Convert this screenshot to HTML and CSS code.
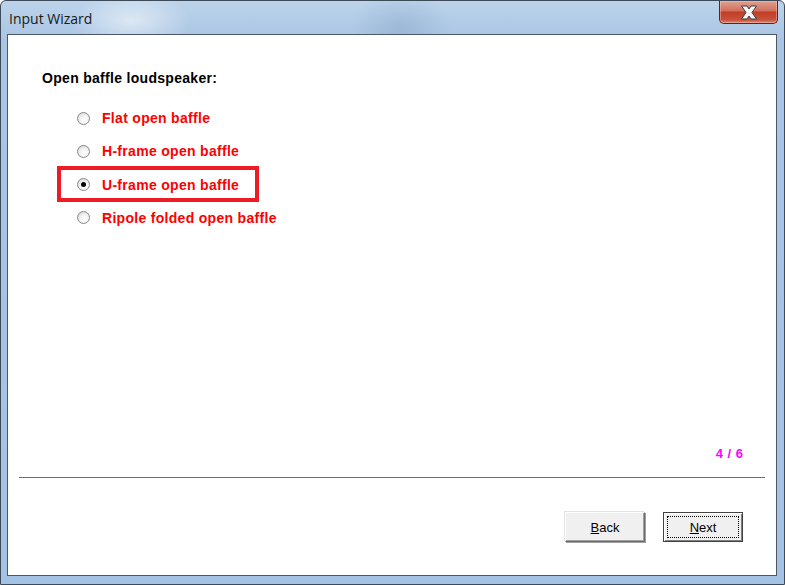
FILE: index.html
```html
<!DOCTYPE html>
<html>
<head>
<meta charset="utf-8">
<link rel="stylesheet" href="styles.css">
</head>
<body>
<div class="window">
  <div class="titlebar">
    <span class="title">Input Wizard</span>
    <div class="close">
      <svg width="22" height="15" viewBox="0 0 22 15">
        <path d="M3.5 1 L9 1 L11 4 L13 1 L18.5 1 L14 7.5 L18.5 14 L13 14 L11 11 L9 14 L3.5 14 L8 7.5 Z" fill="#f6f6f6" stroke="#3c3c3c" stroke-width="1" stroke-linejoin="round"/>
      </svg>
    </div>
  </div>
  <div class="client">
    <div class="heading">Open baffle loudspeaker:</div>
    <ul class="options">
      <li class="opt"><span class="radio"></span><span class="label">Flat open baffle</span></li>
      <li class="opt"><span class="radio"></span><span class="label">H-frame open baffle</span></li>
      <li class="opt"><span class="radio checked"></span><span class="label">U-frame open baffle</span></li>
      <li class="opt"><span class="radio"></span><span class="label">Ripole folded open baffle</span></li>
    </ul>
    <div class="highlight"></div>
    <div class="spacer"></div>
    <div class="pager">4 / 6</div>
    <div class="sep"></div>
    <div class="buttons">
      <button class="btn"><u>B</u>ack</button>
      <button class="btn default"><span class="focus"><u>N</u>ext</span></button>
    </div>
  </div>
</div>
</body>
</html>
```

FILE: styles.css
```css
html, body {
  margin: 0;
  padding: 0;
  width: 785px;
  height: 585px;
  overflow: hidden;
  background: #ffffff;
}

.window {
  position: relative;
  box-sizing: border-box;
  width: 785px;
  height: 585px;
  display: flex;
  flex-direction: column;
  border: 1px solid #3c4a5a;
  border-radius: 6px 6px 0 0;
  background:
    radial-gradient(ellipse 60px 30px at 130px 20px, rgba(255,255,255,0.55), rgba(255,255,255,0) 100%),
    radial-gradient(ellipse 50px 40px at 400px 30px, rgba(120,150,185,0.35), rgba(120,150,185,0) 100%),
    linear-gradient(to bottom, #bcd3ea 0px, #a9c5e4 40px, #a4c2e4 100%);
}

.titlebar {
  height: 33px;
  display: flex;
  align-items: flex-start;
  flex-shrink: 0;
}

.title {
  font-family: "Open Sans", "Noto Sans", sans-serif;
  font-size: 14px;
  color: #1a1a1a;
  margin: 9px 0 0 8px;
  line-height: 18px;
}

.close {
  margin-left: auto;
  margin-right: 6px;
  width: 59px;
  height: 23px;
  box-sizing: border-box;
  border: 1px solid #5e2418;
  border-top: none;
  border-radius: 0 0 5px 5px;
  background: linear-gradient(to bottom, #e0a090 0%, #d1705c 45%, #c13d27 50%, #c8523a 85%, #da8872 100%);
  box-shadow: inset 0 0 0 1px rgba(255,200,190,0.45);
  display: flex;
  align-items: center;
  justify-content: center;
}

.client {
  position: relative;
  flex: 1;
  margin: 0 7px 8px 6px;
  background: #ffffff;
  border: 1px solid #4a5868;
  display: flex;
  flex-direction: column;
  font-family: "Liberation Sans", Arial, sans-serif;
  font-size: 14px;
  letter-spacing: 0.3px;
}

.heading {
  font-weight: bold;
  color: #000000;
  margin: 35px 0 0 34px;
  line-height: 17px;
}

.options {
  list-style: none;
  margin: 23px 0 0 69px;
  padding: 0;
  display: flex;
  flex-direction: column;
  gap: 17.33px;
}

.opt {
  display: flex;
  align-items: center;
  height: 16px;
}

.radio {
  width: 11px;
  height: 11px;
  border-radius: 50%;
  border: 1px solid #8a8a8a;
  background: radial-gradient(circle at 60% 65%, #ffffff 0%, #f2f2f2 45%, #cfcfcf 100%);
  box-sizing: content-box;
  position: relative;
  flex-shrink: 0;
}

.radio.checked::after {
  content: "";
  position: absolute;
  left: 3px;
  top: 3px;
  width: 5px;
  height: 5px;
  border-radius: 50%;
  background: #000000;
}

.label {
  margin-left: 12px;
  color: #ff0000;
  font-weight: bold;
}

.highlight {
  position: absolute;
  left: 49px;
  top: 131px;
  width: 194px;
  height: 28px;
  border: 4px solid #ed1c24;
}

.spacer {
  flex: 1;
}

.pager {
  align-self: flex-end;
  margin-right: 33px;
  color: #ff00ff;
  font-weight: bold;
  font-size: 13px;
  letter-spacing: 0;
  line-height: 16px;
  word-spacing: 1px;
}

.sep {
  margin: 15px 11px 0 11px;
  height: 1px;
  background: #6f6f6f;
}

.buttons {
  display: flex;
  justify-content: flex-end;
  gap: 18px;
  margin: 34px 33px 33px 0;
}

.btn {
  width: 80px;
  height: 30px;
  box-sizing: border-box;
  font-family: "Liberation Sans", Arial, sans-serif;
  font-size: 13px;
  letter-spacing: 0;
  color: #000000;
  background: #f0f0f0;
  border: 1px solid;
  border-color: #ffffff #6a6a6a #6a6a6a #ffffff;
  box-shadow: 1px 1px 0 #a0a0a0, inset -1px -1px 0 #a0a0a0, -1px -1px 0 #e3e3e3;
  padding: 0;
  display: flex;
  align-items: center;
  justify-content: center;
}

.btn.default {
  border: 1px solid #404040;
  box-shadow: inset 1px 1px 0 #ffffff, inset -1px -1px 0 #808080;
  padding: 3px;
}

.focus {
  flex: 1;
  align-self: stretch;
  display: flex;
  align-items: center;
  justify-content: center;
  border: 1px dotted #000000;
}
```
